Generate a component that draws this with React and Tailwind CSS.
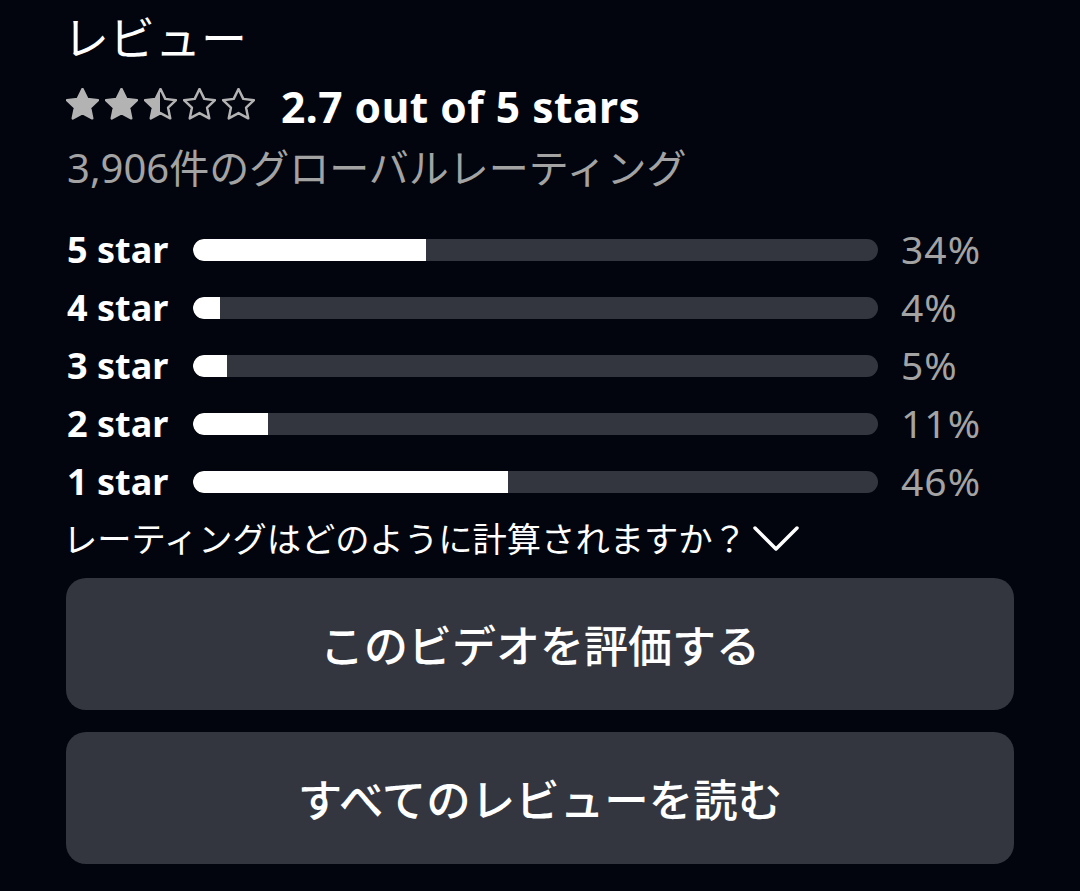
const bars = [
  { label: "5 star", pct: 34 },
  { label: "4 star", pct: 4 },
  { label: "3 star", pct: 5 },
  { label: "2 star", pct: 11 },
  { label: "1 star", pct: 46 },
]

const STAR = "12,2.6 14.9,8.6 21.4,9.4 16.6,13.9 17.9,20.4 12,17.2 6.1,20.4 7.4,13.9 2.6,9.4 9.1,8.6"

const Star = ({ fill }) => (
  <svg width="33" height="33" viewBox="2 2 20 20">
    <defs>
      <linearGradient id="half" x1="0" x2="1" y1="0" y2="0">
        <stop offset="50%" stopColor="#b3b3b3" />
        <stop offset="50%" stopColor="transparent" />
      </linearGradient>
    </defs>
    <polygon
      points={STAR}
      fill={fill === "full" ? "#b3b3b3" : fill === "half" ? "url(#half)" : "none"}
      stroke="#b3b3b3"
      strokeWidth="1.5"
      strokeLinejoin="round"
    />
  </svg>
)

const jp = { fontFamily: '"Noto Sans CJK JP", sans-serif' }

const App = () => {
  return (
    <div
      className="w-[1080px] h-[891px] bg-[#02050d] text-white overflow-hidden"
      style={{ fontFamily: '"Noto Sans", "Noto Sans CJK JP", sans-serif' }}
    >
      <div className="pl-[67px] w-[1014px] pt-[11px]">
        <h1 className="-ml-[4px] text-[46px] leading-[48px] font-normal" style={jp}>レビュー</h1>

        <div className="mt-[21px] h-[48px] flex items-center">
          <div className="flex items-center gap-[6px] -ml-[1px]">
            <Star fill="full" />
            <Star fill="full" />
            <Star fill="half" />
            <Star fill="none" />
            <Star fill="none" />
          </div>
          <span className="ml-[26px] mt-[6px] text-[42.5px] font-bold tracking-[0.5px]">2.7 out of 5 stars</span>
        </div>

        <p className="mt-[16px] text-[40px] leading-[48px] text-[#a3a3a3]">3,906件のグローバルレーティング</p>

        <div className="mt-[29px]">
          {bars.map((b) => (
            <div key={b.label} className="h-[58px] flex items-center">
              <span className="w-[126px] text-[36px] font-bold">{b.label}</span>
              <div className="w-[685px] h-[22px] rounded-full bg-[#33363e] overflow-hidden">
                <div className="h-full bg-white rounded-l-full" style={{ width: `${b.pct}%` }} />
              </div>
              <span className="ml-[23px] -mt-[2px] text-[39px] tracking-[1px] text-[#a3a3a3]">{b.pct}%</span>
            </div>
          ))}
        </div>

        <div className="mt-[7px] h-[40px] flex items-center -ml-[4px]">
          <span className="text-[34.3px]" style={jp}>レーティングはどのように計算されますか？</span>
          <svg className="ml-[5px]" width="48" height="30" viewBox="0 0 48 30" fill="none">
            <path d="M3 5 L24 26 L45 5" stroke="white" strokeWidth="3.5" strokeLinecap="round" strokeLinejoin="round" />
          </svg>
        </div>

        <button className="mt-[20px] -ml-[1px] w-[948px] h-[132px] rounded-[20px] bg-[#33363e] flex items-center justify-center text-[44px] font-medium" style={jp}>
          このビデオを評価する
        </button>
        <button className="mt-[22px] -ml-[1px] w-[948px] h-[132px] rounded-[20px] bg-[#33363e] flex items-center justify-center text-[44.5px] font-medium" style={jp}>
          すべてのレビューを読む
        </button>
      </div>
    </div>
  )
}

export default App
